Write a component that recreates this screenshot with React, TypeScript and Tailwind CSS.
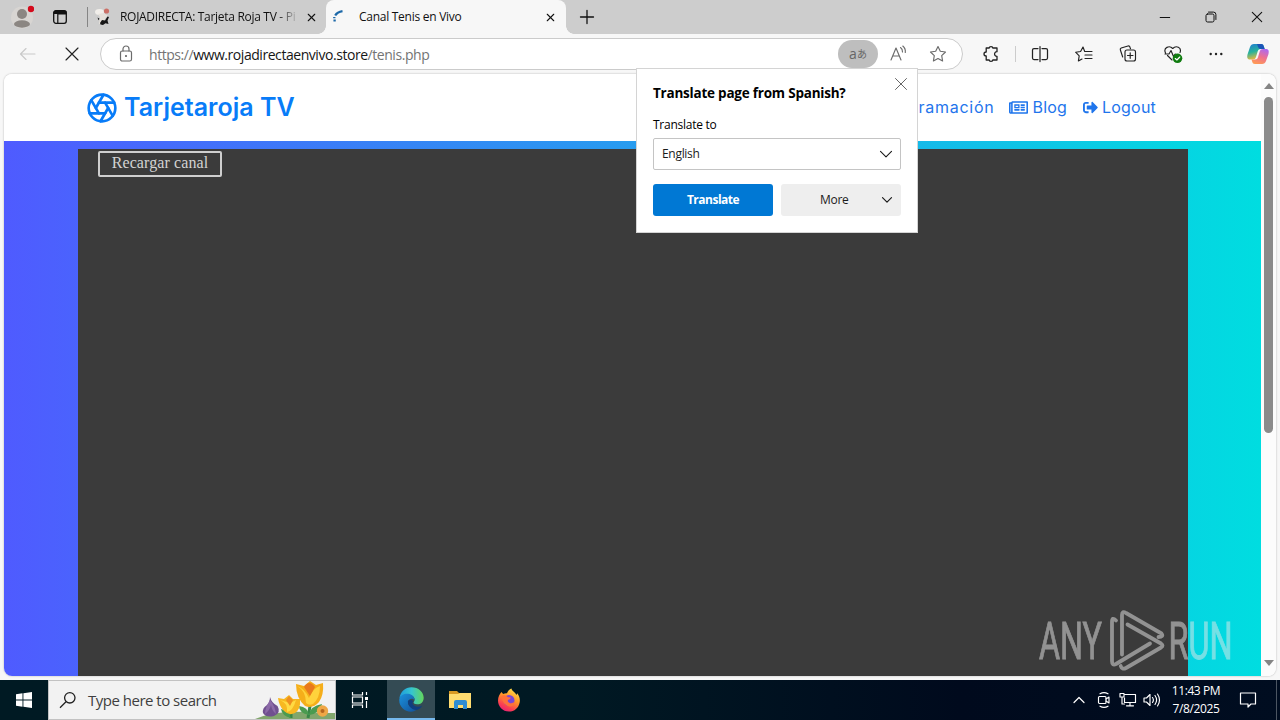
import React from 'react';
import { Aperture, X } from 'lucide-react';
import { FaRegNewspaper, FaSignOutAlt } from 'react-icons/fa';

const line = { fill: 'none', stroke: 'currentColor', strokeLinecap: 'round', strokeLinejoin: 'round' } as const;

function Avatar() {
  return (
    <svg width="24" height="24" viewBox="0 0 24 24" className="ml-[10px] shrink-0">
      <circle cx="12" cy="12.5" r="11" fill="#d8d5d2" />
      <circle cx="12" cy="9" r="5" fill="#8b8682" />
      <ellipse cx="12" cy="19" rx="8" ry="3.700" fill="#8b8682" />
      <circle cx="21" cy="4" r="3.2" fill="#d40b1c" />
    </svg>
  );
}

function TabActions() {
  return (
    <svg width="14" height="14" viewBox="0 0 14 14" className="ml-[19px] shrink-0">
      <rect x=".7" y=".7" width="12.6" height="12.6" rx="2.2" fill="none" stroke="#111" strokeWidth="1.3" />
      <path d="M1 3V2.4Q1 1 2.4 1H11.6Q13 1 13 2.4V4H4.8V13" fill="none" stroke="#111" strokeWidth="1.2" />
      <path d="M1 1h12v3H1z" fill="#111" />
    </svg>
  );
}

function SiteIcon() {
  return (
    <svg width="18" height="18" viewBox="0 0 18 18" className="ml-[6px] shrink-0">
      <ellipse cx="5.500" cy="4" rx="4.5" ry="3" fill="#f1eeea" />
      <circle cx="12.5" cy="3" r="2.6" fill="#cc7067" />
      <path d="M4 6l6-1 4 3-3 2-1 6H5l1-7z" fill="#e6e1db" />
      <path d="M3.500 9.500l2 1.200-1 1.500zM6 15l2-3 3 .5 2.500-4L15 9l-1.500 3.500 1 3.500-3-.8L9 17l-2.500-.5z" fill="#171717" />
    </svg>
  );
}

function NavIcon({ children, className }: { children: React.ReactNode; className: string }) {
  return (
    <svg width="20" height="20" viewBox="0 0 20 20" className={`shrink-0 ${className}`} {...line} strokeWidth="1.15">
      {children}
    </svg>
  );
}

function TitleBar() {
  return (
    <div className="flex h-[34px] items-center bg-[#cdcdcd] text-[12px] text-[#111]">
      <Avatar />
      <TabActions />
      <div className="ml-[20px] h-5 w-px shrink-0 bg-[#858585]" />
      <SiteIcon />
      <div className="ml-[8px] w-[179px] shrink-0 whitespace-nowrap tracking-[-0.3px] [mask-image:linear-gradient(90deg,#000_88%,transparent)]">
        ROJADIRECTA: Tarjeta Roja TV - Pi
      </div>
      <X size={13} strokeWidth={2} className="ml-[6px] shrink-0" />
      <div className="relative ml-[8px] flex h-full w-[240px] shrink-0 items-center rounded-t-[8px] bg-[#f7f7f7]">
        <span className="absolute bottom-0 -left-[8px] size-[8px] bg-[radial-gradient(circle_at_0_0,transparent_7.5px,#f7f7f7_8px)]" />
        <span className="absolute -right-[8px] bottom-0 size-[8px] bg-[radial-gradient(circle_at_100%_0,transparent_7.5px,#f7f7f7_8px)]" />
        <svg width="16" height="16" viewBox="0 0 16 16" className="ml-[5px] -mt-px shrink-0" fill="none" stroke="#1c68a8" strokeWidth="2.3">
          <path d="M4.200 6.500Q6.300 3 11.500 2.200" />
          <path d="M3.300 8v1.200M3.600 10.500v2" />
        </svg>
        <span className="ml-[12px] w-[180px] tracking-[-0.27px]">Canal Tenis en Vivo</span>
        <X size={13} strokeWidth={2} className="ml-[5px]" />
      </div>
      <svg width="16" height="16" viewBox="0 0 16 16" className="ml-[13px] shrink-0" {...line} strokeWidth="1.3">
        <path d="M8 1.5v13M1.5 8h13" />
      </svg>
      <div className="ml-auto flex items-center">
        <svg width="12" height="12" viewBox="0 0 12 12" {...line}><path d="M1.2 6.5h9.5" /></svg>
        <svg width="12" height="12" viewBox="0 0 12 12" className="ml-[34px]" {...line}>
          <rect x="1" y="3" width="8" height="8" rx="1.6" />
          <path d="M3.5 1.1h5a2.4 2.4 0 012.4 2.4v5" />
        </svg>
        <svg width="12" height="12" viewBox="0 0 12 12" className="mr-[17px] ml-[34px]" {...line} strokeWidth="1.1"><path d="M1.3 1.3l9.4 9.4M10.7 1.3l-9.4 9.4" /></svg>
      </div>
    </div>
  );
}

function Copilot() {
  return (
    <svg width="24" height="24" viewBox="0 0 24 24" className="ml-[20px] shrink-0">
      <defs>
        <linearGradient id="cpA" x1="0" y1="0" x2=".3" y2="1">
          <stop stopColor="#207bd4" /><stop offset=".55" stopColor="#28b39b" /><stop offset="1" stopColor="#e8b940" />
        </linearGradient>
        <linearGradient id="cpB" x1=".7" y1="0" x2=".3" y2="1">
          <stop stopColor="#b069ed" /><stop offset=".5" stopColor="#ef718f" /><stop offset="1" stopColor="#ff9b54" />
        </linearGradient>
      </defs>
      <path d="M8 2h7c2 0 2.5 1 3 3l.7 2h-4c-2 0-2.7 1-3.2 3L10 15c-.5 1.7-1.5 2.5-3.5 2.5H4C1 17.500 1 15 1.500 12.500L4 5c.7-2 2-3 4-3z" fill="url(#cpA)" />
      <path d="M11 2h4c2 0 2.500 1 3 3l.7 2h-4c-1.700 0-2.400-1-3.700-5z" fill="#1b55b8" />
      <path d="M16 22H9c-2 0-2.500-1-3-3l-.5-1.500H9c2 0 2.700-1 3.200-3L13.700 9.500c.5-1.700 1.500-2.500 3.500-2.500H20c3 0 3 2.500 2.500 5L20 19c-.7 2-2 3-4 3z" fill="url(#cpB)" />
    </svg>
  );
}

function Toolbar() {
  return (
    <div className="flex h-[40px] items-center bg-[#f7f7f7] text-[#222]">
      <NavIcon className="ml-[18px] text-[#c9c9c9]"><path d="M17 10H2.500M8 4.500L2.500 10 8 15.500" /></NavIcon>
      <NavIcon className="ml-[24px]"><path d="M4 4l12 12M16 4L4 16" /></NavIcon>
      <div className="ml-[18px] flex h-8 w-[863px] shrink-0 items-center rounded-full border border-[#cbcbcb] bg-white text-[#6b6b6b]">
        <svg width="14" height="18" viewBox="0 0 14 18" className="ml-[18px]" {...line} strokeWidth="1.2">
          <rect x="1.500" y="6" width="11" height="10" rx="1.800" />
          <path d="M4 6V4a3 3 0 016 0v2" /><circle cx="7" cy="11" r=".5" fill="currentColor" />
        </svg>
        <div className="ml-[16px] w-[689px] text-[14px] tracking-[-0.45px] text-[#747474]">
          https://<span className="text-[#161616]">www.rojadirectaenvivo.store</span>/tenis.php
        </div>
        <div className="flex h-7 w-10 items-center justify-center rounded-full bg-[#bebebe] text-[#666]">
          <span className="text-[14px] leading-none">a</span>
          <span className="font-['Noto_Sans_CJK_JP',sans-serif] text-[10px] leading-none">あ</span>
        </div>
        <NavIcon className="ml-[10px]"><path d="M3 16L8 4l5 12M4.700 12h6.600M12.500 3.500q2.200 1.500 2 4.500M14.800 2q3 2.500 2.500 6.500" /></NavIcon>
        <NavIcon className="ml-[20px]"><path d="M10 2.500l2.300 4.800 5.200.7-3.800 3.700.9 5.300-4.600-2.500L5.400 17l.9-5.300L2.500 8l5.200-.7z" /></NavIcon>
      </div>
      <NavIcon className="ml-[18px]">
        <path strokeWidth="1.3" d="M5.200 4h3Q8.200 2.600 10 2.600T11.800 4H16v3.700c-3.200-.2-3.200 4.800 0 4.600V16h-4.200q0 1.400-1.800 1.400T8.200 16H5.200v-4Q3 12 3 10t2.200-2z" />
      </NavIcon>
      <div className="ml-[14px] h-4 w-px bg-[#ccc]" />
      <NavIcon className="ml-[14px]"><path strokeWidth="1.25" d="M8 4.500H4Q2.500 4.500 2.500 6v8Q2.500 15.500 4 15.500h4M12 4.500h4q1.500 0 1.500 1.500v8q0 1.500-1.500 1.500h-4M10 2.500v15" /></NavIcon>
      <NavIcon className="ml-[24px]"><path d="M10.700 7.500L9 3 6.600 7.500l-5 .7 3.600 3.700-.8 5L8 15M11 7.500h7M11 11h7M11 14.500h7" /></NavIcon>
      <NavIcon className="ml-[24px]">
        <path d="M4.700 13L2.300 5.800Q2 4.500 3.200 4L10 2q1.600-.3 2 1.200l.5 1.500" />
        <rect x="7" y="6" width="10.500" height="11" rx="2" /><path d="M12.200 8.800v5.500M9.500 11.500H15" />
      </NavIcon>
      <svg width="20" height="20" viewBox="0 0 20 20" className="ml-[25px] shrink-0" {...line} strokeWidth="1.150">
        <path d="M9 16L4.500 11.500M2.500 9C0 3.500 6.500 1 9.700 4.500 13 1 19 3.300 17 8.500M2 10h4l2-3.500 2.500 6 1.700-2.500" />
        <circle cx="14.500" cy="14.300" r="4.800" fill="#107c10" stroke="none" /><path d="M12.300 14.500l1.600 1.500 2.900-3" stroke="#fff" />
      </svg>
      <svg width="20" height="20" viewBox="0 0 20 20" className="ml-[23px] shrink-0" fill="#222"><circle cx="4.700" cy="10" r="1.200" /><circle cx="10" cy="10" r="1.200" /><circle cx="15.300" cy="10" r="1.200" /></svg>
      <Copilot />
    </div>
  );
}

function Chevron() {
  return <svg width="14" height="8" viewBox="0 0 14 8" {...line} strokeWidth="1.100"><path d="M1.500 1.300L7 6.800l5.500-5.500" /></svg>;
}

function TranslatePopup() {
  return (
    <div className="absolute top-[68px] left-[636px] z-10 h-[165px] w-[282px] border border-[#d4d4d4] bg-white px-4 text-[12px] text-[#1b1b1b]">
      <svg width="14" height="14" viewBox="0 0 14 14" className="absolute top-[8px] right-[9px] text-[#666]" {...line}><path d="M1.500 1.500l11 11M12.500 1.500l-11 11" /></svg>
      <div className="mt-[14px] h-5 whitespace-nowrap text-[13.500px] leading-5 font-bold tracking-[-0.22px] text-black">Translate page from Spanish?</div>
      <div className="mt-[14px] h-4 leading-4 font-medium tracking-[-0.25px] text-black">Translate to</div>
      <div className="mt-[5px] flex h-8 items-center justify-between rounded-[2px] border border-[#c4c4c4] pr-[7px] pl-[8px] tracking-[-0.3px]">English<Chevron /></div>
      <div className="mt-[14px] flex gap-2">
        <div className="flex h-8 w-[120px] items-center justify-center rounded-[3px] bg-[#0078d4] font-bold tracking-[-0.5px] text-white">Translate</div>
        <div className="flex h-8 w-[120px] items-center rounded-[3px] bg-[#eee] pr-[8px] pl-[39px]"><span className="flex-1 tracking-[-0.3px]">More</span>
          <svg width="12" height="8" viewBox="0 0 12 8" {...line} strokeWidth="1.200"><path d="M1.500 1.700L6 6.200l4.500-4.500" /></svg>
        </div>
      </div>
    </div>
  );
}

function Page() {
  return (
    <div className="mx-1 flex h-[602px] overflow-hidden rounded-[8px] bg-white shadow-[0_0_2px_rgba(0,0,0,0.3)]">
      <div className="flex w-[1257px] flex-col">
        <header className="flex h-[67px] shrink-0 items-center bg-white font-[Inter,sans-serif] text-[#087cf8]">
          <Aperture size={32} strokeWidth={2} className="ml-[82px]" />
          <span className="ml-[6px] text-[25px] font-semibold tracking-[0.02px] whitespace-nowrap">Tarjetaroja TV</span>
          <nav className="mr-[105px] ml-auto flex items-center text-[16px] text-[#1f75ec]">
            <span className="-mt-px tracking-[0.75px]">Programación</span>
            <FaRegNewspaper size={19} className="mr-[4px] ml-[15px]" /><span className="-mt-px tracking-[0.2px]">Blog</span>
            <FaSignOutAlt size={15} className="mr-[4px] ml-[16px]" /><span className="-mt-px tracking-[0.2px]">Logout</span>
          </nav>
        </header>
        <main className="h-[535px] bg-[linear-gradient(90deg,#4f5bff,#00dde0)] pt-[8px] pl-[74px]">
          <div className="h-full w-[1110px] bg-[#3b3b3b] pt-[2px] pl-[20px]">
            <button className="flex h-[26px] w-[124px] justify-center rounded-[2px] border-2 border-[#cfcfcf] font-['Liberation_Serif',serif] text-[16px] leading-5 tracking-[0.1px] text-[#d3d3d3]">Recargar canal</button>
          </div>
        </main>
      </div>
      <div className="flex w-[15px] flex-col items-center bg-[#fcfcfc]">
        <svg width="10" height="6" viewBox="0 0 10 6" className="mt-[9px]"><path d="M5 0l5 6H0z" fill="#858585" /></svg>
        <div className="mt-[8px] h-[336px] w-[9px] rounded-full bg-[#8b8b8b]" />
        <svg width="10" height="6" viewBox="0 0 10 6" className="mt-auto mb-[10px]"><path d="M0 0h10L5 6z" fill="#858585" /></svg>
      </div>
    </div>
  );
}

function Watermark() {
  return (
    <svg width="210" height="70" viewBox="0 0 210 70" className="absolute top-[608px] left-[1036px] z-10 opacity-50" fill="none" stroke="#e8e8e8">
      <g fill="#e8e8e8" strokeWidth=".9" fontFamily="Roboto, sans-serif" fontSize="51">
        <text x="3" y="51" textLength="63" lengthAdjust="spacingAndGlyphs">ANY</text>
        <text x="132.500" y="51" textLength="64" lengthAdjust="spacingAndGlyphs">RUN</text>
      </g>
      <g strokeWidth="3.800" strokeLinecap="round" strokeLinejoin="round">
        <path d="M80 12.500Q76 8.500 76 14V53Q76 58 80 56L114 35.500" />
        <path d="M86 46.500V7Q86 2.500 90 5L125.500 25.500Q128 29 122.500 29" />
        <path d="M91.500 16.500L125 35.500Q128 37.500 125 39.500L90 60Q86 62 84.700 58" />
      </g>
    </svg>
  );
}

function Flowers() {
  return (
    <svg width="80" height="39" viewBox="0 0 80 39" className="absolute right-0 bottom-0">
      <path d="M0 39Q20 30 53 32Q70 33 80 33V39z" fill="#81a66c" />
      <path d="M15 17q1.500 6 7.500 9 4 7-3.500 10-8 2-11-3-1-5 4-8 3-3 3-8z" fill="#70508f" /><path d="M15 20q-5 8-5 14 5-4 6-9 1 6 5 9-1-8-6-14z" fill="#8c6aa8" />
      <path d="M36 38V28M53 38l3-18" stroke="#398647" strokeWidth="3" />
      <path d="M36 38q-2-8-10-9 1 7 10 9zM54 35q1-9 13-11-1 9-13 11zM54 35Q53 27 44 26q0 7 10 9z" fill="#4b9b50" />
      <path d="M23 18l6 1 5-4 4 4 7 0q1 10-5 14-6 3-11-2-5-5-6-13z" fill="#f7b821" /><path d="M25 20q8 3 7 12 6-1 9-12l-6 3z" fill="#ffda43" /><path d="M31 20l3-4 4 4-3 6z" fill="#ee8f20" />
      <path d="M41 4l8 2 6-5 6 4 7-2q1 12-4 19-6 7-14 4-9-8-9-22z" fill="#f5ae1a" /><path d="M42 6q9 5 9 17 3 3 7 1 7-6 7-18-7 2-11 12-5-10-12-12z" fill="#ffd23c" /><path d="M49 7q5-8 11 0l-5 9z" fill="#e9791d" />
      <circle cx="67.500" cy="31" r="5.700" fill="#efa746" /><circle cx="67.500" cy="31" r="2" fill="#b5661f" />
    </svg>
  );
}

function EdgeLogo() {
  return (
    <svg width="25" height="25" viewBox="0 0 24 24">
      <defs>
        <linearGradient id="eg" x2="1"><stop stopColor="#1d9bdd" /><stop offset=".5" stopColor="#36c5cf" /><stop offset="1" stopColor="#64d65b" /></linearGradient>
        <linearGradient id="eb" x2="1" y2="1"><stop stopColor="#1b91dc" /><stop offset="1" stopColor="#124f98" /></linearGradient>
      </defs>
      <path d="M.4 10.800C1.400 4.500 6 .3 12 .3c6.800 0 11.700 4.800 11.700 10 0 4.200-2.700 6.300-6.200 6.300-3 0-4-1.400-3.300-2.200 2.400-3-.5-6.900-5-6.900C5 7.500 2 8.400.4 10.800z" fill="url(#eg)" />
      <path d="M.4 11.200C1.500 7.400 5.300 6 9 6.500c3.800.5 6.200 3.300 5.500 6-.7-1.900-5-2-5.800 1.500-.8 4.500 4.800 7.500 10 6.200-2 2.400-4.700 3.500-7.200 3.500C4.500 23.500-.7 17.400.4 11.200z" fill="url(#eb)" />
      <path d="M8.500 14c0 4.300 4 8.500 8.800 8 3-1 4.100-2.600 5-4.300-2.500 1.500-5.300 1.700-7.500.3-2-1.200-2.400-3-1.300-4.200-1-2-5-1.700-5 .2z" fill="#103e7f" />
    </svg>
  );
}

function Firefox() {
  return (
    <svg width="24" height="24" viewBox="0 0 24 24">
      <defs>
        <linearGradient id="ff" x1=".8" x2=".3" y2="1"><stop stopColor="#ffe34b" /><stop offset=".45" stopColor="#ff9428" /><stop offset=".8" stopColor="#fa3d52" /><stop offset="1" stopColor="#e72176" /></linearGradient>
      </defs>
      <path d="M4.500 4l1.600 2Q8 5 10 5.200C11 3 12 1.500 14.500.5 14.700 3 18 4 19.500 7l.7-1.800c2.300 2.800 3 6 2.500 9C21.600 20 17.500 23.500 12 23.500 5.500 23.500 1 18.500 1 12.500 1 9 2.500 6 4.500 4z" fill="url(#ff)" />
      <circle cx="12" cy="12.500" r="5.500" fill="#7846d6" />
      <path d="M4.500 8c2-1.400 4-1 5.600.4 1 1.200 3.200.7 3.600 1.300-.5 1.800-2.500 1.500-3 2.900 0 2.600 4 3.600 6.800 1.500l-1 3.500c-4.800 2.800-11.200-1-12-9.600z" fill="#ff7139" />
    </svg>
  );
}

function Taskbar() {
  return (
    <div className="flex h-10 items-center bg-[linear-gradient(90deg,#001a23,#001923_45%,#000a1d_75%,#000d20)] text-white">
      <div className="flex w-12 shrink-0 justify-center">
        <svg width="16" height="16" viewBox="0 0 16 16" fill="#fff"><path d="M0 2.200l6.500-.9v6.200H0zM7.400 1.200L16 0v7.500H7.400zM0 8.400h6.500v6.300L0 13.800zM7.400 8.400H16V16l-8.600-1.200z" /></svg>
      </div>
      <div className="relative flex h-full w-[288px] shrink-0 items-center border border-[#c2c2c2] bg-[#f2f2f2] text-[#3f3f3f]">
        <svg width="18" height="18" viewBox="0 0 18 18" className="ml-[10px]" fill="none" stroke="#202020" strokeWidth="1.300"><circle cx="10.800" cy="6.800" r="5.200" /><path d="M7 10.700L1 16.700" /></svg>
        <span className="ml-[11px] text-[15px] tracking-[-0.5px]">Type here to search</span>
        <Flowers />
      </div>
      <div className="flex w-[51px] justify-center pr-[3px]">
        <svg width="18" height="18" viewBox="0 0 18 18" fill="none" stroke="#fff" strokeWidth="1.200"><path d="M1.500 1v3h10V1M1.500 17v-3h10v3M1.500 6h10v6h-10zM15.500 1v3M15.500 10v7" /><path d="M14 6h3v3h-3z" fill="#fff" stroke="none" /></svg>
      </div>
      <div className="flex h-full w-12 items-center justify-center border-b-2 border-[#76b9ed] bg-[#344b54]"><EdgeLogo /></div>
      <div className="flex w-[50px] justify-center">
        <svg width="22" height="20" viewBox="0 0 22 20"><path d="M0 1h8l2 2h11v6H0z" fill="#d99a24" /><path d="M0 4h9l2-1h11v15H0z" fill="#ffdc70" /><path d="M5 19V12q0-2 2-2h9q2 0 2 2v7h-4v-4H9v4z" fill="#2e8cd3" /></svg>
      </div>
      <div className="flex w-[48px] justify-center"><Firefox /></div>
      <div className="ml-auto flex h-full items-center">
        <svg width="12" height="8" viewBox="0 0 12 8" {...line} strokeWidth="1.200"><path d="M1 6.500l5-5 5 5" /></svg>
        <svg width="14" height="18" viewBox="0 0 14 18" className="ml-[12px]" {...line} strokeWidth="1.150"><rect x="1.500" y="5.500" width="7.500" height="7" rx="1" /><path d="M9 8l3-2v6l-3-2M3 2.800q4-2.300 8 0M3 15.200q4 2.300 8 0" /></svg>
        <svg width="18" height="16" viewBox="0 0 18 16" className="ml-[8px]" {...line} strokeWidth="1.150"><path d="M6 2.500h10.500v8H5.500V6M11 10.500v3M7.500 13.800h7M1 1.500h4v3.500H1zM3 5v7h2.500" /></svg>
        <svg width="18" height="16" viewBox="0 0 18 16" className="ml-[6px]" {...line} strokeWidth="1.150"><path d="M1 6h2.500L7 2.500v11L3.500 10H1zM9.500 5.500q1.800 2.500 0 5M12 3.500q3.200 4.500 0 9M14.500 2q4 6 0 12" /></svg>
        <div className="ml-[8px] w-[54px] text-center text-[12px] leading-[18px] tracking-[-0.4px] whitespace-nowrap"><div>11:43 PM</div><div>7/8/2025</div></div>
        <svg width="18" height="18" viewBox="0 0 18 18" className="ml-[16px]" {...line} strokeWidth="1.200"><path d="M1.500 2h15v11H12l-3 3v-3H1.500z" /></svg>
        <div className="ml-[19px] h-full w-[4px] border-l border-[#4c5662]" />
      </div>
    </div>
  );
}

export default function App() {
  return (
    <div className="relative h-[720px] w-[1280px] overflow-hidden bg-[#f7f7f7] font-['Open_Sans','Noto_Sans',sans-serif]">
      <TitleBar />
      <Toolbar />
      <Page />
      <div className="h-1" />
      <Taskbar />
      <TranslatePopup />
      <Watermark />
    </div>
  );
}
